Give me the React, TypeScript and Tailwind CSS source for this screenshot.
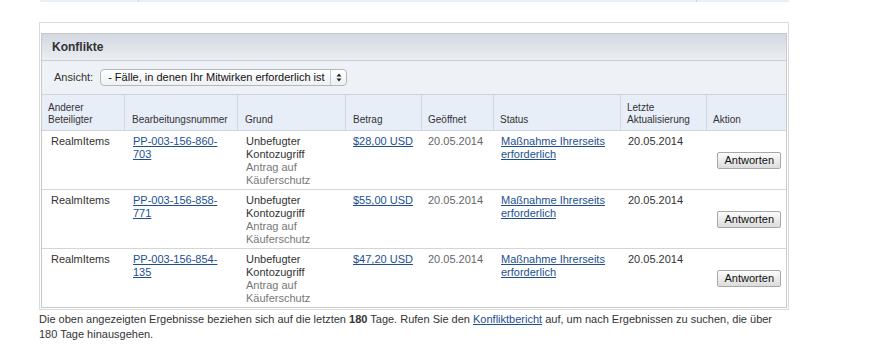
export default function App() {
  const rows = [
    { id1: "PP-003-156-860-", id2: "703", amount: "$28,00 USD" },
    { id1: "PP-003-156-858-", id2: "771", amount: "$55,00 USD" },
    { id1: "PP-003-156-854-", id2: "135", amount: "$47,20 USD" },
  ];

  const cols = "grid grid-cols-[82px_113px_108px_76px_72px_127px_86px_80px]";
  const link = "text-[#1d4f91] underline";

  return (
    <div className="w-[891px] h-[352px] bg-white font-['Liberation_Sans',Arial,sans-serif] text-[#333]">
      {/* bottom of previous table */}
      <div className="ml-[40px] w-[749px] h-[2px] bg-[#e9eff7] flex">
        <div className="w-[99px] border-r border-[#c9d2dd]" />
        <div className="w-[558px] border-r border-[#c9d2dd]" />
      </div>

      {/* Konflikte box */}
      <div className="ml-[39px] mt-[20px] w-[750px] border border-[#dadada] pt-[10px] px-[1px] pb-[1px]">
        <div className="border border-[#c9c9c9]">
          <div className="h-[27px] flex items-center pl-[10px] bg-gradient-to-b from-[#d3d9e2] to-[#ebeef2] border-b border-[#c9ced6]">
            <span className="text-[12px] font-bold text-[#333]">Konflikte</span>
          </div>

          <div className="h-[34px] flex items-center pl-[12px] bg-[#eef1f5] border-b border-[#cfd4db]">
            <span className="text-[11px] text-[#333]">Ansicht:</span>
            <div className="ml-[7px] w-[247px] h-[17px] flex items-center rounded-[4px] border border-[#b3b8c0] bg-gradient-to-b from-white to-[#eef0f3] text-[11px] text-[#111]">
              <span className="flex-1 pl-[7px]">- Fälle, in denen Ihr Mitwirken erforderlich ist</span>
              <div className="w-[16px] h-full flex items-center justify-center border-l border-[#c5c9cf]">
                <svg width="6" height="9" viewBox="0 0 6 9">
                  <path d="M3 0.5 L5.5 3.5 L0.5 3.5 Z" fill="#222" />
                  <path d="M3 8.5 L5.5 5.5 L0.5 5.5 Z" fill="#222" />
                </svg>
              </div>
            </div>
          </div>

          {/* table header */}
          <div className={`${cols} h-[36px] bg-[#e7eef8] border-b border-[#cfd6df] text-[10px] leading-[12px] text-[#333]`}>
            <div className="flex items-end pl-[6px] pb-[4px]">
              <span>Anderer<br />Beteiligter</span>
            </div>
            <div className="flex items-end pl-[7px] pb-[4px] border-l border-[#cfd6df]">Bearbeitungsnummer</div>
            <div className="flex items-end pl-[7px] pb-[4px] border-l border-[#cfd6df]">Grund</div>
            <div className="flex items-end pl-[7px] pb-[4px] border-l border-[#cfd6df]">Betrag</div>
            <div className="flex items-end pl-[6px] pb-[4px] border-l border-[#cfd6df]">Geöffnet</div>
            <div className="flex items-end pl-[6px] pb-[4px] border-l border-[#cfd6df]">Status</div>
            <div className="flex items-end pl-[6px] pb-[4px] border-l border-[#cfd6df]">
              <span>Letzte<br />Aktualisierung</span>
            </div>
            <div className="flex items-end pl-[6px] pb-[4px] border-l border-[#cfd6df]">Aktion</div>
          </div>

          {/* rows */}
          {rows.map((r, i) => (
            <div
              key={r.id1}
              className={`${cols} text-[11px] leading-[13px] ${i < rows.length - 1 ? "h-[59px] border-b border-[#d5d5d5]" : "h-[58px]"}`}
            >
              <div className="pt-[4px] pl-[9px]">RealmItems</div>
              <div className="pt-[4px] pl-[9px]">
                <span className={link}>{r.id1}</span>
                <br />
                <span className={link}>{r.id2}</span>
              </div>
              <div className="pt-[4px] pl-[9px]">
                <div>Unbefugter<br />Kontozugriff</div>
                <div className="text-[#777]">Antrag auf<br />Käuferschutz</div>
              </div>
              <div className="pt-[4px] pl-[8px]">
                <span className={link}>{r.amount}</span>
              </div>
              <div className="pt-[4px] pl-[7px] text-[#666]">20.05.2014</div>
              <div className="pt-[4px] pl-[8px]">
                <span className={link}>Maßnahme Ihrerseits</span>
                <br />
                <span className={link}>erforderlich</span>
              </div>
              <div className="pt-[4px] pl-[8px]">20.05.2014</div>
              <div className="flex items-center justify-end pr-[5px]">
                <button className="h-[17px] px-[6px] rounded-[2px] border border-[#a8a8a8] bg-gradient-to-b from-[#fcfcfc] to-[#dcdcdc] text-[11px] leading-[15px] text-[#111]">
                  Antworten
                </button>
              </div>
            </div>
          ))}
        </div>
      </div>

      {/* footer note */}
      <p className="ml-[39px] mt-[2px] w-[752px] text-[11px] leading-[15px] text-[#333]">
        Die oben angezeigten Ergebnisse beziehen sich auf die letzten <b>180</b> Tage. Rufen Sie den{" "}
        <span className={link}>Konfliktbericht</span> auf, um nach Ergebnissen zu suchen, die über 180 Tage hinausgehen.
      </p>
    </div>
  );
}
